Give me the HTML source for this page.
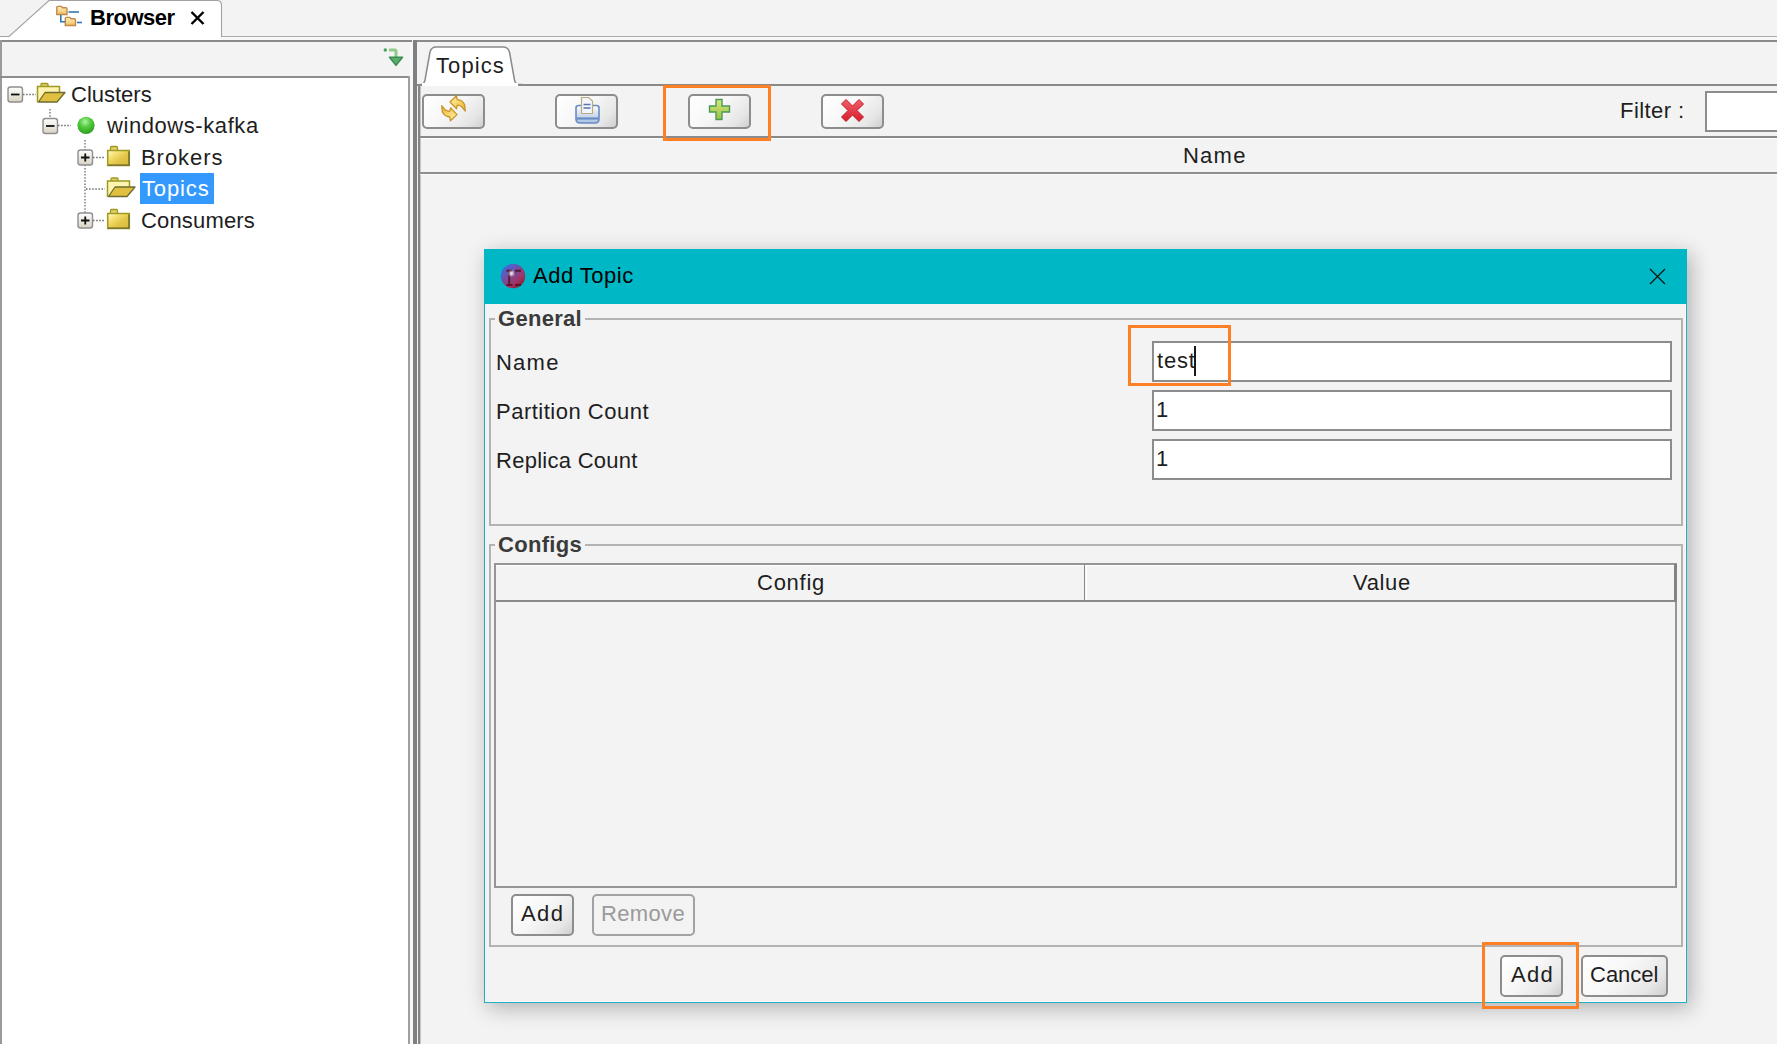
<!DOCTYPE html>
<html><head><meta charset="utf-8">
<style>
html,body{margin:0;padding:0;}
body{width:1777px;height:1044px;overflow:hidden;position:relative;background:#f3f3f3;font-family:"Liberation Sans",sans-serif;font-size:22px;color:#1e1e1e;}
.a{position:absolute;}
.t{position:absolute;white-space:pre;line-height:22px;}
.hl{position:absolute;height:0;}
.btn{position:absolute;box-sizing:border-box;border:2px solid #8d8d8d;border-radius:5px;background:linear-gradient(135deg,#ffffff 0%,#f7f7f7 45%,#e6e6e6 80%,#cfcfcf 100%);}
.orange{position:absolute;box-sizing:border-box;border:3px solid #ff7f24;}
.field{position:absolute;box-sizing:border-box;border:2px solid #8c8c8c;background:#fff;}
</style></head>
<body>

<!-- ===== top strip ===== -->
<div class="a" style="left:0;top:36px;width:1777px;height:1px;background:#ababab"></div>
<div class="a" style="left:0;top:37px;width:1777px;height:3px;background:#f8f8f8"></div>
<svg class="a" style="left:0;top:0" width="240" height="42">
  <path d="M0,41 L0,36.5 L9,36.5 L49,0.5 L217,0.5 Q221.5,0.5 221.5,5 L221.5,37" fill="#fff" stroke="#a2a2a2" stroke-width="1.1"/>
  <rect x="0" y="37.2" width="221" height="3" fill="#fff"/>
</svg>
<div class="a" style="left:0;top:40px;width:412px;height:2px;background:#8a8a8a"></div>
<div class="a" style="left:413px;top:40px;width:1364px;height:2px;background:#8a8a8a"></div>

<!-- browser icon -->
<svg class="a" style="left:54px;top:4px" width="32" height="24">
  <defs><linearGradient id="bif" x1="0" y1="0" x2="0" y2="1"><stop offset="0" stop-color="#fff0c0"/><stop offset="1" stop-color="#f0c060"/></linearGradient></defs>
  <path d="M2.8,10.5 L2.8,3.5 Q2.8,2.4 4,2.4 L7.3,2.4 L8.5,3.8 L11.8,3.8 Q13,3.8 13,5 L13,10.5 Z" fill="url(#bif)" stroke="#c0894a" stroke-width="1.4"/>
  <path d="M11.3,21.5 L11.3,14.5 Q11.3,13.4 12.5,13.4 L15.8,13.4 L17,14.8 L20.3,14.8 Q21.5,14.8 21.5,16 L21.5,21.5 Z" fill="url(#bif)" stroke="#c0894a" stroke-width="1.4"/>
  <path d="M6.8,11 L6.8,17.8 L11,17.8" fill="none" stroke="#2f77b8" stroke-width="1.6"/>
  <path d="M14.5,8 L25,8" stroke="#2f77b8" stroke-width="1.6"/>
  <path d="M23,18.5 L28,18.5" stroke="#2f77b8" stroke-width="1.6"/>
</svg>
<div class="t" style="left:90px;top:7px;font-weight:bold;font-size:22px;letter-spacing:-0.5px;color:#000">Browser</div>
<svg class="a" style="left:189px;top:10px" width="18" height="16">
  <path d="M2.5,2 L14.5,14 M14.5,2 L2.5,14" stroke="#000" stroke-width="2.4"/>
</svg>

<!-- ===== left pane ===== -->
<div class="a" style="left:0;top:40px;width:2px;height:1004px;background:#9a9a9a"></div>
<!-- green arrow icon -->
<svg class="a" style="left:382px;top:46px" width="24" height="22">
  <circle cx="3.3" cy="4" r="1.7" fill="#3ea55a"/>
  <path d="M7,4 L12.5,4 Q14,4 14,5.5 L14,14" fill="none" stroke="#8ccc88" stroke-width="3"/>
  <path d="M7.5,11.3 L20.5,11.3 L14,19.3 Z" fill="#5aae6a" stroke="#3a8e50" stroke-width="1.6" stroke-linejoin="round"/>
</svg>
<!-- tree panel -->
<div class="a" style="left:2px;top:78px;width:406px;height:966px;background:#fff"></div>
<div class="a" style="left:0;top:76px;width:409px;height:2px;background:#8e8e8e"></div>
<div class="a" style="left:408px;top:76px;width:2px;height:968px;background:#a0a0a0"></div>
<div class="a" style="left:410px;top:42px;width:3px;height:1002px;background:#f8f8f8"></div>
<div class="a" style="left:413px;top:40px;width:4px;height:1004px;background:#808080"></div>
<div class="a" style="left:417px;top:84px;width:1px;height:960px;background:#f0f0f0"></div>
<div class="a" style="left:418px;top:84px;width:2px;height:960px;background:#858585"></div>
<div class="a" style="left:420px;top:84px;width:1px;height:960px;background:#c4c4c4"></div>

<!-- tree expanders & lines -->
<svg class="a" style="left:0;top:78px" width="300" height="170">
  <defs>
    <linearGradient id="exg" x1="0" y1="0" x2="0" y2="1"><stop offset="0" stop-color="#ffffff"/><stop offset="1" stop-color="#d9d2c2"/></linearGradient>
    <linearGradient id="fold" x1="0" y1="0" x2="1" y2="1"><stop offset="0" stop-color="#fffbd0"/><stop offset="0.3" stop-color="#f6e070"/><stop offset="0.6" stop-color="#e2c548"/><stop offset="1" stop-color="#d8b838"/></linearGradient>
    <pattern id="dots" width="3" height="3" patternUnits="userSpaceOnUse"><rect width="1.2" height="1.2" fill="#8a8a8a"/></pattern>
  </defs>
  <!-- dotted lines -->
  <path d="M23,16.5 L36,16.5" stroke="#6a6a6a" stroke-width="1.3" stroke-dasharray="1.5,1.6"/>
  <path d="M50,31 L50,40" stroke="#6a6a6a" stroke-width="1.3" stroke-dasharray="1.5,1.6"/>
  <path d="M58,47.5 L71,47.5" stroke="#6a6a6a" stroke-width="1.3" stroke-dasharray="1.5,1.6"/>
  <path d="M85,62 L85,150" stroke="#6a6a6a" stroke-width="1.3" stroke-dasharray="1.5,1.6"/>
  <path d="M93,79.5 L105,79.5" stroke="#6a6a6a" stroke-width="1.3" stroke-dasharray="1.5,1.6"/>
  <path d="M86,111 L105,111" stroke="#6a6a6a" stroke-width="1.3" stroke-dasharray="1.5,1.6"/>
  <path d="M93,142.5 L105,142.5" stroke="#6a6a6a" stroke-width="1.3" stroke-dasharray="1.5,1.6"/>
  <!-- expander boxes -->
  <rect x="8" y="9" width="14.5" height="15" rx="2.5" fill="url(#exg)" stroke="#8f8f8f" stroke-width="1.4"/>
  <path d="M11,16.5 L19.5,16.5" stroke="#111" stroke-width="1.8"/>
  <rect x="43" y="40.5" width="14.5" height="15" rx="2.5" fill="url(#exg)" stroke="#8f8f8f" stroke-width="1.4"/>
  <path d="M46,48 L54.5,48" stroke="#111" stroke-width="1.8"/>
  <rect x="78" y="72" width="14.5" height="15" rx="2.5" fill="url(#exg)" stroke="#8f8f8f" stroke-width="1.4"/>
  <path d="M81,79.5 L89.5,79.5 M85.25,75.5 L85.25,83.5" stroke="#111" stroke-width="1.8"/>
  <rect x="78" y="135" width="14.5" height="15" rx="2.5" fill="url(#exg)" stroke="#8f8f8f" stroke-width="1.4"/>
  <path d="M81,142.5 L89.5,142.5 M85.25,138.5 L85.25,146.5" stroke="#111" stroke-width="1.8"/>
  <!-- Clusters open folder -->
  <rect x="41.0" y="5.5" width="7" height="4" rx="1" fill="#e6d06a" stroke="#9c9a22" stroke-width="1.3"/>
  <path d="M37.5,24.5 L37.5,8.5 L59.5,8.5 L59.5,14.5" fill="#fff3b0" stroke="#9c9a22" stroke-width="1.5"/>
  <path d="M38.5,24.0 L45.0,14.5 L65,14.5 L57,24.0 Z" fill="#dfc040" stroke="#6e6c30" stroke-width="1.3" stroke-linejoin="round"/>
  <!-- green circle -->
  <defs><radialGradient id="gball" cx="0.45" cy="0.3" r="0.7"><stop offset="0" stop-color="#b4f0a8"/><stop offset="0.45" stop-color="#52cc3c"/><stop offset="1" stop-color="#2e9e22"/></radialGradient></defs>
  <circle cx="86" cy="47.3" r="8.6" fill="url(#gball)"/>
  <!-- Brokers folder -->
  <rect x="110.5" y="68.5" width="7" height="5" rx="1" fill="#e6d06a" stroke="#9c9a22" stroke-width="1.3"/>
  <rect x="107.7" y="72.5" width="21.6" height="15" fill="url(#fold)" stroke="#9c9a22" stroke-width="1.5"/>
  <path d="M108,87.1 L129,87.1 L129,73.5" fill="none" stroke="#6e6c30" stroke-width="1.3"/>
  <!-- Topics open folder -->
  <rect x="111.0" y="100" width="7" height="4" rx="1" fill="#e6d06a" stroke="#9c9a22" stroke-width="1.3"/>
  <path d="M107.5,119 L107.5,103 L129.5,103 L129.5,109" fill="#fff3b0" stroke="#9c9a22" stroke-width="1.5"/>
  <path d="M108.5,118.5 L115.0,109 L135,109 L127,118.5 Z" fill="#dfc040" stroke="#6e6c30" stroke-width="1.3" stroke-linejoin="round"/>
  <!-- Consumers folder -->
  <rect x="110.5" y="131.5" width="7" height="5" rx="1" fill="#e6d06a" stroke="#9c9a22" stroke-width="1.3"/>
  <rect x="107.7" y="135.5" width="21.6" height="15" fill="url(#fold)" stroke="#9c9a22" stroke-width="1.5"/>
  <path d="M108,150.1 L129,150.1 L129,136.5" fill="none" stroke="#6e6c30" stroke-width="1.3"/>
</svg>
<div class="t" style="left:71px;top:84px">Clusters</div>
<div class="t" style="left:107px;top:115px;letter-spacing:0.57px">windows-kafka</div>
<div class="t" style="left:141px;top:147px;letter-spacing:0.95px">Brokers</div>
<div class="a" style="left:140px;top:173px;width:74px;height:31px;background:#3399ff"></div>
<div class="t" style="left:142px;top:178px;color:#fff;letter-spacing:0.86px">Topics</div>
<div class="t" style="left:141px;top:210px;letter-spacing:0.16px">Consumers</div>

<!-- ===== right pane ===== -->
<!-- tab strip -->
<div class="a" style="left:417px;top:84px;width:1360px;height:1.6px;background:#8a8a8a"></div>
<svg class="a" style="left:418px;top:44px" width="104" height="44">
  <path d="M2,40.5 L3,40.5 Q6,40.5 7,36 L12,8 Q13.5,3 18,3 L85,3 Q90,3 91.5,8 L96.5,36 Q97.5,40.5 100.5,40.5 L104,40.5" fill="#fff" stroke="#8a8a8a" stroke-width="1.5"/>
  <rect x="4" y="39" width="96" height="3" fill="#fff"/>
</svg>
<div class="t" style="left:436px;top:55px;letter-spacing:1.08px">Topics</div>

<!-- toolbar buttons -->
<div class="btn" style="left:422px;top:94px;width:63px;height:35px"></div>
<div class="btn" style="left:555px;top:94px;width:63px;height:35px"></div>
<div class="btn" style="left:688px;top:94px;width:63px;height:35px"></div>
<div class="btn" style="left:821px;top:94px;width:63px;height:35px"></div>
<!-- refresh icon -->
<svg class="a" style="left:438px;top:94px" width="34" height="34">
  <defs><linearGradient id="rg" x1="0" y1="0" x2="1" y2="1"><stop offset="0" stop-color="#fff3b0"/><stop offset="0.6" stop-color="#f5d060"/><stop offset="1" stop-color="#e0a830"/></linearGradient></defs>
  <path d="M12,8 L18.5,1.8 L19.2,5.6 Q24.5,6 26.6,10.5 L27.3,17 L23.8,12.8 Q22,11.2 19.2,11.2 L18.5,14.8 Z" fill="url(#rg)" stroke="#c9952a" stroke-width="1.3" stroke-linejoin="round"/>
  <path d="M12,8 L18.5,1.8 L19.2,5.6 Q24.5,6 26.6,10.5 L27.3,17 L23.8,12.8 Q22,11.2 19.2,11.2 L18.5,14.8 Z" transform="rotate(180 15.5 14.3)" fill="url(#rg)" stroke="#c9952a" stroke-width="1.3" stroke-linejoin="round"/>
</svg>
<!-- print icon -->
<svg class="a" style="left:573px;top:96px" width="30" height="30">
  <defs><linearGradient id="pg" x1="0" y1="0" x2="0" y2="1"><stop offset="0" stop-color="#ffffff"/><stop offset="1" stop-color="#a9bfe0"/></linearGradient></defs>
  <path d="M3,12 Q3,9.5 5.5,9.5 L23.5,9.5 Q26,9.5 26,12 L26,23 Q26,27 22,27 L7,27 Q3,27 3,23 Z" fill="url(#pg)" stroke="#6a8cc4" stroke-width="1.6"/>
  <path d="M3.5,22.5 L25.5,22.5" stroke="#6a8cc4" stroke-width="2.2"/>
  <path d="M8.5,1.5 L15.5,1.5 L19.5,5 L19.5,17.5 L8.5,17.5 Z" fill="#f3f6ff" stroke="#b9ab7a" stroke-width="1.2"/>
  <path d="M10.5,8.5 L17.5,8.5 M10.5,12 L17.5,12" stroke="#5875b0" stroke-width="1.4"/>
</svg>
<!-- plus icon -->
<svg class="a" style="left:707px;top:97px" width="26" height="26">
  <defs><linearGradient id="plg" x1="0" y1="0" x2="0" y2="1"><stop offset="0" stop-color="#d8e87a"/><stop offset="1" stop-color="#98c040"/></linearGradient></defs>
  <path d="M9,2.5 L15,2.5 L15,9 L22.5,9 L22.5,15 L15,15 L15,22.5 L9,22.5 L9,15 L2.5,15 L2.5,9 L9,9 Z" fill="url(#plg)" stroke="#4a9a5a" stroke-width="1.4"/>
</svg>
<!-- red x icon -->
<svg class="a" style="left:840px;top:97px" width="26" height="26">
  <defs><linearGradient id="xg" x1="0" y1="0" x2="0" y2="1"><stop offset="0" stop-color="#f0606a"/><stop offset="1" stop-color="#d81c2c"/></linearGradient></defs>
  <path d="M6,2.5 L12.5,9 L19,2.5 L23.5,7 L17,13.5 L23.5,20 L19,24.5 L12.5,18 L6,24.5 L1.5,20 L8,13.5 L1.5,7 Z" fill="url(#xg)" stroke="#c41a28" stroke-width="1" stroke-linejoin="round"/>
</svg>

<div class="t" style="left:1620px;top:100px;letter-spacing:0.44px">Filter :</div>
<div class="field" style="left:1705px;top:91px;width:80px;height:41px"></div>

<!-- topics table -->
<div class="a" style="left:420px;top:136px;width:1357px;height:1.6px;background:#8a8a8a"></div>
<div class="a" style="left:421px;top:137.6px;width:1356px;height:1px;background:#fff"></div>
<div class="a" style="left:420px;top:172px;width:1357px;height:2px;background:#909090"></div>
<div class="a" style="left:420px;top:174px;width:1357px;height:1px;background:#f8f8f8"></div>
<div class="t" style="left:1183px;top:145px;letter-spacing:1.23px">Name</div>

<!-- ===== dialog ===== -->
<div class="a" style="left:484px;top:249px;width:1203px;height:754px;box-shadow:4px 5px 20px rgba(0,0,0,0.28);background:#f3f3f3"></div>
<div class="a" style="left:485px;top:304px;width:1201px;height:698px;box-sizing:border-box;border:1px solid #fdf8f8;border-top:none"></div>
<div class="a" style="left:484px;top:249px;width:1203px;height:55px;background:#00b7c5"></div>
<div class="a" style="left:484px;top:304px;width:1px;height:699px;background:#1ab2c2"></div>
<div class="a" style="left:1686px;top:304px;width:1px;height:699px;background:#1ab2c2"></div>
<div class="a" style="left:484px;top:1002px;width:1203px;height:1px;background:#1ab2c2"></div>
<!-- dialog icon -->
<svg class="a" style="left:498px;top:262px" width="30" height="30">
  <defs>
    <linearGradient id="dball" x1="0.15" y1="0.1" x2="0.85" y2="0.9"><stop offset="0" stop-color="#3a6ee0"/><stop offset="0.45" stop-color="#7a4a9a"/><stop offset="0.75" stop-color="#a03464"/><stop offset="1" stop-color="#8a1a38"/></linearGradient>
    <radialGradient id="glow" cx="0.5" cy="0.5" r="0.5"><stop offset="0" stop-color="#ffffff" stop-opacity="0.95"/><stop offset="1" stop-color="#ffffff" stop-opacity="0"/></radialGradient>
  </defs>
  <circle cx="15" cy="14" r="12.2" fill="url(#dball)"/>
  <path d="M8.5,8.8 L14,8.8 M11.2,8.8 L11.2,23 M8.5,23 L14.5,23 M17,8.8 L23,8.8 M17,23 L23,23" stroke="#5a0e1e" stroke-width="2" opacity="0.85"/>
  <path d="M18,9.5 L13.5,15" stroke="#6a1a40" stroke-width="1.6" opacity="0.5"/>
  <circle cx="13.5" cy="11.5" r="4" fill="url(#glow)"/>
</svg>
<div class="t" style="left:533px;top:265px;color:#000;letter-spacing:0.49px">Add Topic</div>
<svg class="a" style="left:1648px;top:267px" width="20" height="20">
  <path d="M2,2 L17,17 M17,2 L2,17" stroke="#111" stroke-width="1.15"/>
</svg>

<!-- General group -->
<div class="a" style="left:489px;top:318px;width:1194px;height:208px;box-sizing:border-box;border:2px solid #b3b3b3;"></div>
<div class="a" style="left:495px;top:312px;width:90px;height:14px;background:#f3f3f3"></div>
<div class="t" style="left:498px;top:308px;font-weight:bold;font-size:22px;letter-spacing:0.3px;color:#3a3a3a">General</div>
<div class="t" style="left:496px;top:352px;letter-spacing:1.23px">Name</div>
<div class="t" style="left:496px;top:401px;letter-spacing:0.5px">Partition Count</div>
<div class="t" style="left:496px;top:450px;letter-spacing:0.27px">Replica Count</div>
<div class="field" style="left:1152px;top:341px;width:520px;height:41px"></div>
<div class="field" style="left:1152px;top:390px;width:520px;height:41px"></div>
<div class="field" style="left:1152px;top:439px;width:520px;height:41px"></div>
<div class="t" style="left:1157px;top:350px;letter-spacing:0.8px">test</div>
<div class="a" style="left:1194px;top:346px;width:2px;height:30px;background:#1a1a1a"></div>
<div class="t" style="left:1156px;top:399px">1</div>
<div class="t" style="left:1156px;top:448px">1</div>

<!-- Configs group -->
<div class="a" style="left:489px;top:544px;width:1194px;height:403px;box-sizing:border-box;border:2px solid #b3b3b3;"></div>
<div class="a" style="left:495px;top:535px;width:90px;height:14px;background:#f3f3f3"></div>
<div class="t" style="left:498px;top:534px;font-weight:bold;font-size:22px;letter-spacing:0.3px;color:#3a3a3a">Configs</div>
<!-- table -->
<div class="a" style="left:494px;top:563px;width:1183px;height:325px;box-sizing:border-box;border:2px solid #959595;"></div>
<div class="a" style="left:496px;top:565px;width:1178px;height:1.2px;background:#fff"></div>
<div class="a" style="left:496px;top:600px;width:1181px;height:1.6px;background:#8a8a8a"></div>
<div class="a" style="left:1084px;top:564px;width:1.4px;height:37px;background:#8a8a8a"></div>
<div class="a" style="left:1086px;top:566px;width:1px;height:34px;background:#fff"></div>
<div class="a" style="left:1674px;top:564px;width:3px;height:37px;background:#828282"></div>
<div class="t" style="left:757px;top:572px;letter-spacing:0.74px">Config</div>
<div class="t" style="left:1353px;top:572px;letter-spacing:0.65px">Value</div>

<div class="btn" style="left:511px;top:894px;width:63px;height:42px"></div>
<div class="t" style="left:521px;top:903px;letter-spacing:1.45px">Add</div>
<div class="a" style="left:592px;top:894px;width:103px;height:42px;box-sizing:border-box;border:2px solid #a2a2a2;border-radius:5px;"></div>
<div class="t" style="left:601px;top:903px;color:#9a9a9a;letter-spacing:0.35px">Remove</div>

<div class="btn" style="left:1500px;top:955px;width:63px;height:42px"></div>
<div class="t" style="left:1511px;top:964px;letter-spacing:1.3px">Add</div>
<div class="btn" style="left:1581px;top:955px;width:87px;height:42px"></div>
<div class="t" style="left:1590px;top:964px">Cancel</div>

<div class="orange" style="left:663px;top:85px;width:108px;height:56px"></div>
<div class="orange" style="left:1128px;top:325px;width:103px;height:61px"></div>
<div class="orange" style="left:1482px;top:942px;width:97px;height:67px"></div>
</body></html>
